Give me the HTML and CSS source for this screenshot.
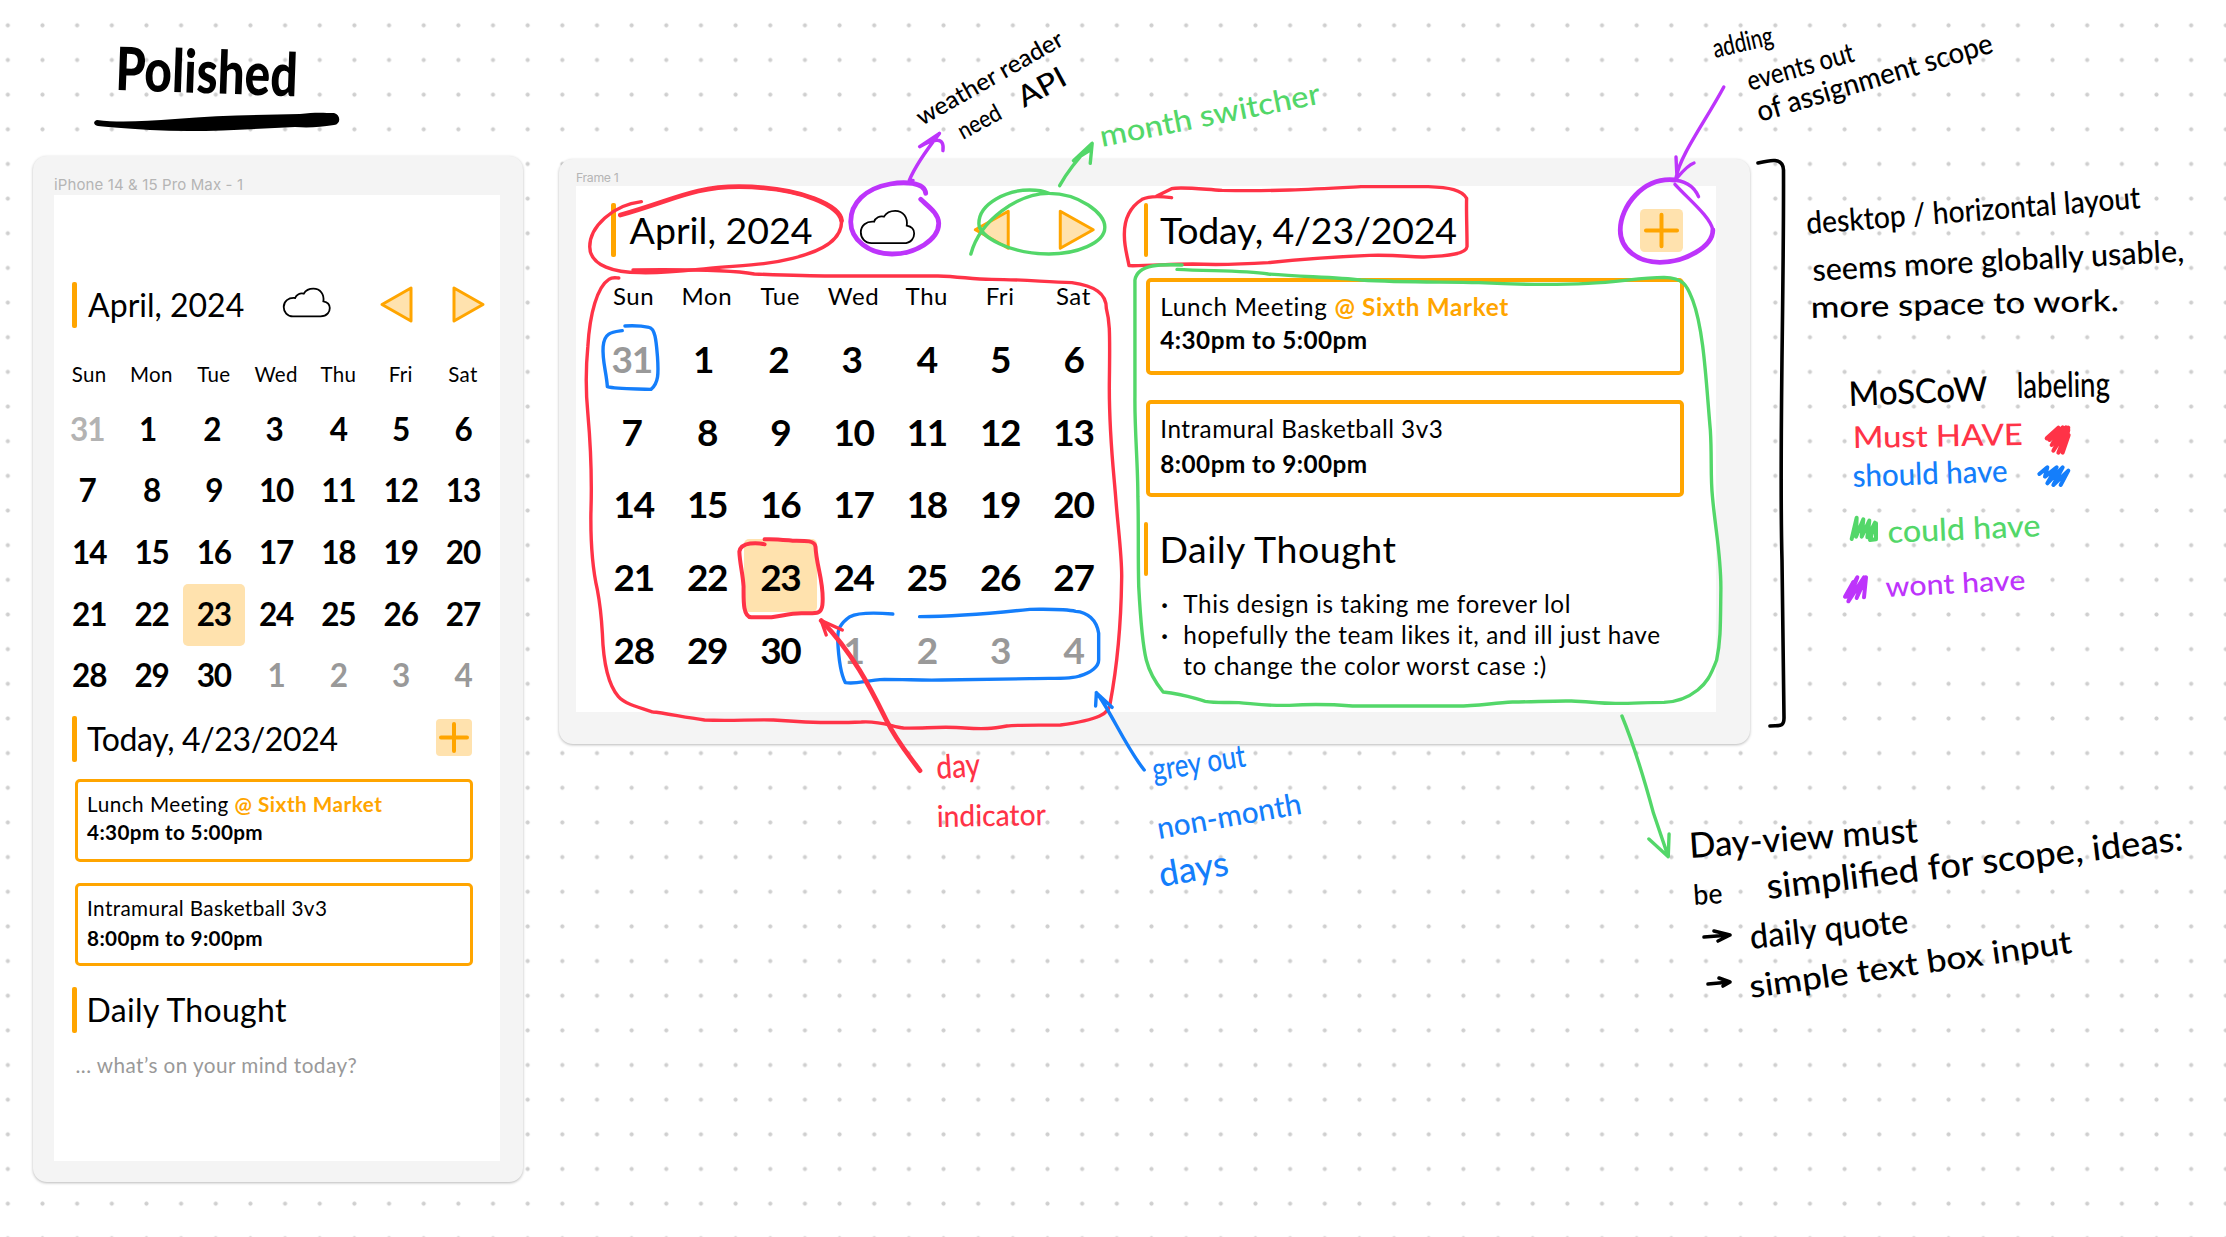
FILE: index.html
```html
<!DOCTYPE html>
<html lang="en">
<head>
<meta charset="utf-8">
<title>Calendar mockups</title>
<link rel="stylesheet" href="styles.css">
</head>
<body>
<main class="board">

  <section class="frame phone">
    <div class="frame-label">iPhone 14 &amp; 15 Pro Max - 1</div>
    <div class="screen">
      <header class="bar-title month-head">
        <h2 class="title">April, 2024</h2>
        <svg class="cloud" viewBox="0 0 133 87" preserveAspectRatio="none"><path d="M28 85H105C125 85 131 70 131 60C131 48 123 42 113 40C116 20 105 2 85 2C70 2 62 10 58 17C48 14 37 20 34 30C15 28 2 40 2 57C2 72 12 85 28 85Z"/></svg>
        <svg class="tri prev" viewBox="0 0 33 37" preserveAspectRatio="none"><path d="M31 2V35L2 18.500Z"/></svg>
        <svg class="tri next" viewBox="0 0 33 37" preserveAspectRatio="none"><path d="M2 2V35L31 18.500Z"/></svg>
      </header>
      <div class="weekdays"><span>Sun</span><span>Mon</span><span>Tue</span><span>Wed</span><span>Thu</span><span>Fri</span><span>Sat</span></div>
      <div class="days">
        <b class="out pale">31</b><b>1</b><b>2</b><b>3</b><b>4</b><b>5</b><b>6</b>
        <b>7</b><b>8</b><b>9</b><b>10</b><b>11</b><b>12</b><b>13</b>
        <b>14</b><b>15</b><b>16</b><b>17</b><b>18</b><b>19</b><b>20</b>
        <b>21</b><b>22</b><b class="today">23</b><b>24</b><b>25</b><b>26</b><b>27</b>
        <b>28</b><b>29</b><b>30</b><b class="out">1</b><b class="out">2</b><b class="out">3</b><b class="out">4</b>
      </div>
      <header class="bar-title day-head">
        <h2 class="title">Today, 4/23/2024</h2>
        <svg class="add" viewBox="0 0 36 37" preserveAspectRatio="none"><rect width="36" height="37" rx="4"/><path d="M5 18.500H31M18 5V32"/></svg>
      </header>
      <article class="event first"><p>Lunch Meeting <em>@ Sixth Market</em></p><p><strong>4:30pm to 5:00pm</strong></p></article>
      <article class="event second"><p>Intramural Basketball 3v3</p><p><strong>8:00pm to 9:00pm</strong></p></article>
      <header class="bar-title thought-head"><h2 class="title">Daily Thought</h2></header>
      <p class="hint">... what’s on your mind today?</p>
    </div>
  </section>

  <section class="frame desktop">
    <div class="frame-label">Frame 1</div>
    <div class="screen">
      <div class="month-col">
        <header class="bar-title month-head">
          <h2 class="title">April, 2024</h2>
          <svg class="cloud" viewBox="0 0 133 87" preserveAspectRatio="none"><path d="M28 85H105C125 85 131 70 131 60C131 48 123 42 113 40C116 20 105 2 85 2C70 2 62 10 58 17C48 14 37 20 34 30C15 28 2 40 2 57C2 72 12 85 28 85Z"/></svg>
          <svg class="tri prev" viewBox="0 0 33 37" preserveAspectRatio="none"><path d="M31 2V35L2 18.500Z"/></svg>
          <svg class="tri next" viewBox="0 0 33 37" preserveAspectRatio="none"><path d="M2 2V35L31 18.500Z"/></svg>
        </header>
        <div class="weekdays"><span>Sun</span><span>Mon</span><span>Tue</span><span>Wed</span><span>Thu</span><span>Fri</span><span>Sat</span></div>
        <div class="days">
          <b class="out">31</b><b>1</b><b>2</b><b>3</b><b>4</b><b>5</b><b>6</b>
          <b>7</b><b>8</b><b>9</b><b>10</b><b>11</b><b>12</b><b>13</b>
          <b>14</b><b>15</b><b>16</b><b>17</b><b>18</b><b>19</b><b>20</b>
          <b>21</b><b>22</b><b class="today">23</b><b>24</b><b>25</b><b>26</b><b>27</b>
          <b>28</b><b>29</b><b>30</b><b class="out">1</b><b class="out">2</b><b class="out">3</b><b class="out">4</b>
        </div>
      </div>
      <div class="day-col">
        <header class="bar-title day-head">
          <h2 class="title">Today, 4/23/2024</h2>
          <svg class="add" viewBox="0 0 36 37" preserveAspectRatio="none"><rect width="36" height="37" rx="4"/><path d="M5 18.500H31M18 5V32"/></svg>
        </header>
        <article class="event first"><p>Lunch Meeting <em>@ Sixth Market</em></p><p><strong>4:30pm to 5:00pm</strong></p></article>
        <article class="event second"><p>Intramural Basketball 3v3</p><p><strong>8:00pm to 9:00pm</strong></p></article>
        <header class="bar-title thought-head"><h2 class="title">Daily Thought</h2></header>
        <ul class="notes">
          <li>This design is taking me forever lol</li>
          <li>hopefully the team likes it, and ill just have<br>to change the color worst case :)</li>
        </ul>
      </div>
    </div>
  </section>

  <svg class="ink" viewBox="0 0 2226 1237">
    <!-- heading -->
    <text class="black heavy" transform="translate(115 90) rotate(2)" font-size="60" textLength="182" lengthAdjust="spacingAndGlyphs">Polished</text>
    <path class="solid" d="M97 120C120 123 145 121 175 119C220 115 260 115 300 114C315 112 325 113 334 113C341 115 341 124 334 125C320 127 310 128 295 127C250 129 200 133 150 130C130 129 110 127 98 126C93 125 93 121 97 120Z"/>

    <!-- marks over the month half -->
    <g transform="translate(540 0) scale(.38265 .33333)">
      <path class="red" d="M265 605C190 615 130 680 130 740C130 800 200 818 260 818C330 820 380 812 440 805C540 795 590 795 660 775C750 750 790 710 788 662C785 620 690 562 520 560"/>
      <path class="red wide" d="M788 662C785 620 690 562 520 560C400 560 350 600 210 645"/>
      <path class="purple wide" d="M1008 580C1005 545 950 545 915 552C850 565 812 610 812 665C812 720 860 762 920 762C980 762 1042 720 1042 670C1042 640 1015 620 995 598"/>
      <path class="purple" d="M975 541L965 541C980 500 1010 450 1044 400L992 440C1030 415 1058 410 1053 452"/>
      <path class="green" d="M1126 762C1150 660 1250 580 1330 580C1410 580 1475 640 1476 680C1478 730 1400 762 1330 762C1230 762 1146 710 1147 670C1147 610 1220 570 1280 570C1300 570 1320 575 1330 580"/>
      <path class="green" d="M1358 557C1380 510 1410 470 1443 430L1438 490M1443 430L1394 482L1438 450"/>
      <path class="red" d="M243 810C400 808 500 810 560 822C650 826 700 828 760 828L1040 828C1100 830 1130 838 1180 838C1260 838 1320 846 1390 848C1450 858 1480 880 1480 925C1488 960 1490 980 1488 1140C1486 1300 1500 1420 1505 1500C1512 1600 1522 1680 1520 1740C1518 1900 1508 2000 1490 2110C1490 2140 1460 2160 1360 2175C1300 2176 1250 2174 1220 2178C1180 2186 1160 2188 1110 2184C1050 2178 1000 2186 950 2184C920 2180 890 2162 840 2166C760 2170 700 2168 610 2160C550 2158 500 2164 430 2160C370 2150 320 2138 295 2136C250 2120 220 2110 205 2090C175 2050 165 1970 163 1900C160 1840 155 1800 150 1770C140 1720 132 1650 133 1540C136 1440 132 1330 125 1240C120 1180 120 1100 125 1040C130 940 150 860 180 838C190 830 200 834 206 834"/>
      <path class="blue" d="M215 992C190 996 168 996 165 1040C162 1080 174 1120 176 1160C200 1168 250 1166 290 1168C310 1150 310 1120 307 1070C304 1030 302 985 285 982C260 976 240 977 222 978"/>
      <path class="red mid" d="M587 1633C570 1628 525 1624 521 1655C522 1690 530 1720 532 1760C532 1800 530 1850 552 1852L605 1852C640 1846 660 1838 690 1840C720 1840 735 1844 738 1815C744 1750 722 1700 720 1640C718 1620 690 1622 660 1622C640 1620 610 1616 587 1618"/>
      <path class="blue" d="M922 1842C880 1838 830 1838 810 1850C785 1870 776 1890 778 1920C780 1970 785 2020 798 2048C830 2054 850 2040 900 2038C960 2038 1000 2042 1050 2040L1280 2036C1340 2034 1390 2038 1410 2028C1440 2018 1460 2000 1460 1980L1460 1900C1455 1860 1430 1836 1400 1834C1370 1826 1330 1828 1280 1828C1200 1838 1100 1850 992 1850"/>
      <path class="red wide" d="M735 1862C820 1960 870 2080 905 2160C930 2220 960 2260 993 2312"/>
      <path class="red" d="M748 1905L735 1862L790 1890"/>
      <path class="blue" d="M1452 2118L1454 2078L1495 2122M1454 2078C1490 2130 1530 2240 1579 2310"/>
    </g>

    <!-- marks over the day half -->
    <g transform="translate(1100 130) scale(.42092 .33333)">
      <path class="red" d="M170 203C140 198 115 198 100 208C60 240 57 290 58 320C58 350 65 380 69 407C120 408 160 402 220 402C290 406 350 402 400 398C500 385 560 380 640 376C720 374 730 382 770 381C830 378 870 372 872 350C872 300 870 240 871 205C860 180 830 172 780 170L620 170C500 178 420 184 290 181C230 176 190 170 170 176L135 198"/>
      <path class="purple wide" d="M1366 150C1290 140 1236 230 1236 300C1236 360 1280 397 1330 397C1390 397 1456 350 1456 300"/>
      <path class="purple" d="M1422 200C1410 165 1385 150 1355 150M1456 300C1450 260 1400 210 1366 163"/>
      <path class="green" d="M183 418C260 424 340 420 400 432C480 440 560 442 620 450C720 458 820 455 900 458C1000 464 1100 464 1160 460C1230 458 1280 442 1340 442C1390 444 1395 470 1408 510C1435 600 1440 760 1450 900C1454 980 1450 1040 1455 1100C1462 1200 1476 1280 1475 1380C1474 1480 1475 1530 1465 1590C1450 1640 1440 1660 1420 1680C1400 1700 1370 1716 1340 1717C1300 1717 1270 1720 1230 1720C1190 1721 1160 1714 1120 1713C1070 1712 1030 1716 980 1716C930 1720 890 1728 850 1728L600 1728C540 1722 500 1722 450 1726C400 1728 370 1722 330 1718C300 1716 280 1720 250 1714C220 1704 200 1692 150 1686C130 1655 118 1630 110 1590C100 1540 95 1440 92 1370C90 1280 92 1190 90 1100C90 1000 82 900 83 800L83 450C90 400 150 403 195 405"/>
      <path class="green" d="M1240 1758C1270 1850 1300 1980 1315 2050L1350 2180M1304 2127L1350 2180L1352 2112"/>
    </g>

    <path class="purple" d="M1723.800 87C1705 122 1680 155 1676 178M1676 157L1677 178C1682 172 1688 165 1694 163"/>
    <path class="black-line" d="M1758 163C1770 160 1783 157 1783.500 170C1784 300 1779 450 1782 560L1784 718C1784 728 1778 725 1770 726"/>

    <!-- handwritten notes -->
    <g class="black">
      <text transform="translate(922 126) rotate(-29.700)" font-size="24" textLength="165" lengthAdjust="spacingAndGlyphs">weather reader</text>
      <text transform="translate(963 140) rotate(-28.500)" font-size="24" textLength="46" lengthAdjust="spacingAndGlyphs">need</text>
      <text transform="translate(1024 108) rotate(-28.500)" font-size="29" textLength="51" lengthAdjust="spacingAndGlyphs">API</text>
      <text transform="translate(1715 58) rotate(-13)" font-size="27" textLength="61" lengthAdjust="spacingAndGlyphs">adding</text>
      <text transform="translate(1750 91) rotate(-15.800)" font-size="28" textLength="110" lengthAdjust="spacingAndGlyphs">events out</text>
      <text transform="translate(1760 122) rotate(-16.600)" font-size="29" textLength="245" lengthAdjust="spacingAndGlyphs">of assignment scope</text>
      <text transform="translate(1807 234) rotate(-4.400)" font-size="31" textLength="335" lengthAdjust="spacingAndGlyphs">desktop / horizontal layout</text>
      <text transform="translate(1813 281) rotate(-3)" font-size="31" textLength="372" lengthAdjust="spacingAndGlyphs">seems more globally usable,</text>
      <text transform="translate(1811 318) rotate(-1.300)" font-size="30" textLength="308" lengthAdjust="spacingAndGlyphs">more space to work.</text>
      <text transform="translate(1849 406) rotate(-2.200)" font-size="34" textLength="139" lengthAdjust="spacingAndGlyphs">MoSCoW</text>
      <text transform="translate(2017 398) rotate(-1)" font-size="35" textLength="93" lengthAdjust="spacingAndGlyphs">labeling</text>
      <text transform="translate(1690 858) rotate(-4)" font-size="35" textLength="229" lengthAdjust="spacingAndGlyphs">Day-view must</text>
      <text transform="translate(1694 905) rotate(-4)" font-size="28" textLength="29" lengthAdjust="spacingAndGlyphs">be</text>
      <text transform="translate(1768 899) rotate(-6.700)" font-size="35" textLength="419" lengthAdjust="spacingAndGlyphs">simplified for scope, ideas:</text>
      <text transform="translate(1751 949) rotate(-6)" font-size="34" textLength="159" lengthAdjust="spacingAndGlyphs">daily quote</text>
      <text transform="translate(1751 998) rotate(-8)" font-size="32" textLength="325" lengthAdjust="spacingAndGlyphs">simple text box input</text>
    </g>
    <path class="black-line" d="M1704 937L1730 935M1714 931L1730 935L1718 941M1708 984L1730 982M1719 978L1730 982L1723 986"/>

    <text class="green-text" transform="translate(1102 147) rotate(-11.200)" font-size="30" textLength="224" lengthAdjust="spacingAndGlyphs">month switcher</text>
    <g class="red-text">
      <text transform="translate(1853 448) rotate(-1)" font-size="30" textLength="170" lengthAdjust="spacingAndGlyphs">Must HAVE</text>
      <text transform="translate(937 779) rotate(-4)" font-size="33" textLength="44" lengthAdjust="spacingAndGlyphs">day</text>
      <text transform="translate(937 827) rotate(-1)" font-size="30" textLength="109" lengthAdjust="spacingAndGlyphs">indicator</text>
    </g>
    <g class="blue-text">
      <text transform="translate(1853 487) rotate(-2)" font-size="31" textLength="155" lengthAdjust="spacingAndGlyphs">should have</text>
      <text transform="translate(1154 781) rotate(-9)" font-size="32" textLength="94" lengthAdjust="spacingAndGlyphs">grey out</text>
      <text transform="translate(1159 839) rotate(-10)" font-size="30" textLength="146" lengthAdjust="spacingAndGlyphs">non-month</text>
      <text transform="translate(1161 887) rotate(-10)" font-size="35" textLength="70" lengthAdjust="spacingAndGlyphs">days</text>
    </g>
    <text class="green-text" transform="translate(1888 543) rotate(-2.500)" font-size="31" textLength="153" lengthAdjust="spacingAndGlyphs">could have</text>
    <text class="purple-text" transform="translate(1886 597) rotate(-3)" font-size="28" textLength="140" lengthAdjust="spacingAndGlyphs">wont have</text>

    <!-- colour swatches -->
    <g transform="translate(1760 330) scale(.33333)">
      <path class="red mid" d="M860 325L895 293L868 330L908 292L875 345L918 292L880 362L925 293L895 368L926 315L908 368L925 300"/>
      <path class="blue mid" d="M838 432L862 412L855 440L890 412L862 460L908 412L880 465L925 422L902 465"/>
      <path class="green mid" d="M275 627L290 563L288 620L310 568L305 620L328 572L322 622L345 578L330 630L348 628V580"/>
      <path class="purple mid" d="M255 800L280 756L258 800L292 742L265 814L312 742L290 804L318 742L312 802"/>
    </g>
  </svg>
</main>
</body>
</html>
```
FILE: styles.css
```css
* { box-sizing: border-box; margin: 0; padding: 0; }

body {
  width: 2226px;
  height: 1237px;
  overflow: hidden;
  background: #fff;
  color: #000;
  font-family: Lato, "Open Sans", sans-serif;
}

em { font-style: normal; }

/* dotted canvas */
.board {
  position: relative;
  width: 2226px;
  height: 1237px;
  background-image: radial-gradient(circle at center, #cfcfcf 1.7px, rgba(207, 207, 207, 0) 2.4px);
  background-size: 34.667px 34.667px;
  background-position: -9.500px 8px;
}

.frame {
  --accent: #ffa500;
  --tint: #ffe2ae;
  position: absolute;
  background: #f4f4f4;
  border-radius: 14px;
  box-shadow: 0 1px 3px rgba(0, 0, 0, .28);
}

.frame-label {
  color: #b5b5b5;
  font-family: Inter, sans-serif;
  white-space: nowrap;
}

.screen { background: #fff; }

/* section headings */
.bar-title {
  display: flex;
  align-items: center;
  height: var(--bar-h);
  white-space: nowrap;
}
.bar-title::before {
  content: "";
  flex: none;
  width: 4.600px;
  height: 100%;
  border-radius: 2px;
  background: var(--accent);
}
.title { flex: none; font-size: var(--title); font-weight: 400; line-height: var(--bar-h); }

.cloud path { fill: none; stroke: #000; stroke-width: 1.800px; vector-effect: non-scaling-stroke; }
.tri path { fill: var(--tint); stroke: var(--accent); stroke-width: 3px; stroke-linejoin: round; vector-effect: non-scaling-stroke; }
.add rect { fill: var(--tint); }
.add path { stroke: var(--accent); stroke-width: 4px; stroke-linecap: round; vector-effect: non-scaling-stroke; }
.cloud, .tri, .add { flex: none; display: block; overflow: visible; }

/* calendar */
.weekdays, .days { display: grid; text-align: center; }
.days b { padding-top: 1.500px; font-weight: 700; color: #000; }
.days .out { color: #999; }
.days .pale { color: #b3b3b3; }
.days .today { border-radius: 5px; background: var(--tint); }
.days b:nth-child(1) { padding-right: 4px; }
.days b:nth-child(2) { padding-right: 8px; }
.days b:nth-child(3), .days b:nth-child(4), .days b:nth-child(8) { padding-right: 4px; }

/* events */
.event { border: var(--edge) solid var(--accent); border-radius: 5px; white-space: nowrap; }
.event em { color: var(--accent); font-weight: 700; }
.event strong { font-weight: 700; }

/* phone */
.phone {
  --bar-h: 46px;
  --title: 32px;
  --edge: 3px;
  left: 33px;
  top: 156px;
  width: 490px;
  height: 1026px;
  padding: 18px 23px 21px 21px;
}
.phone .frame-label { height: 21.300px; font-size: 15px; line-height: 21.300px; letter-spacing: .12px; }
.phone .screen { height: 965.400px; padding: 86.400px 27.500px 0 18px; }
.phone .title { margin-left: 11.500px; width: 195.100px; }
.phone .cloud { width: 47.500px; height: 29px; margin: -5px 49px 0 0; }
.phone .tri { width: 33px; height: 37px; margin-top: -1px; }
.phone .prev { margin-right: 39px; }
.phone .weekdays, .phone .days { width: 436.100px; margin-left: -14px; grid-template-columns: repeat(7, 62.300px); }
.phone .weekdays { margin-top: 23px; font-size: 20.500px; line-height: 46.400px; letter-spacing: .3px; }
.phone .days { grid-auto-rows: 61.700px; font-size: 31.500px; line-height: 61.700px; letter-spacing: -1.200px; }
.phone .today { margin: 1.500px 0 -2px; line-height: 59px; }
.phone .day-head { margin-top: 10.500px; }
.phone .day-head .title { margin-left: 10.500px; width: 349px; letter-spacing: -.35px; }
.phone .add { width: 36px; height: 37px; margin-top: -4px; }
.phone .event { margin-left: 2.600px; height: 82.700px; padding: 8px 0 0 9.500px; font-size: 20.700px; line-height: 28px; letter-spacing: .5px; }
.phone .event strong { letter-spacing: .35px; }
.phone .first { margin-top: 17.300px; }
.phone .event.second { margin-top: 21.300px; padding-top: 6.500px; line-height: 30px; letter-spacing: .38px; }
.phone .thought-head { margin-top: 21px; }
.phone .thought-head .title { margin-left: 10px; letter-spacing: .3px; }
.phone .hint { margin: 18px 0 0 3.500px; font-size: 20.700px; line-height: 28px; letter-spacing: .45px; color: #999; white-space: nowrap; }

/* desktop */
.desktop {
  --bar-h: 53.500px;
  --title: 37.500px;
  --edge: 4px;
  left: 558.500px;
  top: 159px;
  width: 1191.500px;
  height: 584.500px;
  padding: 10px 34.500px 31px 17.500px;
}
.desktop .frame-label { height: 17px; font-size: 12.300px; line-height: 17px; letter-spacing: -.35px; }
.desktop .screen { display: grid; grid-template-columns: 532.800px 1fr; height: 526px; padding: 17.300px 31.900px 0 35px; }
.desktop .title { margin-left: 14px; width: 230px; }
.desktop .cloud { width: 55px; height: 34px; margin: -6px 58.700px 0 0; }
.desktop .tri { width: 37.500px; height: 41.500px; }
.desktop .prev { margin-right: 47px; }
.desktop .weekdays, .desktop .days { width: 513.100px; margin-left: -14px; grid-template-columns: repeat(7, 73.300px); }
.desktop .weekdays { margin-top: 13px; font-size: 24px; line-height: 51.600px; letter-spacing: .6px; }
.desktop .days { grid-auto-rows: 72.700px; font-size: 37px; line-height: 72.700px; letter-spacing: -1.400px; }
.desktop .day-head .title { margin-left: 11.500px; width: 480.500px; letter-spacing: -.2px; }
.desktop .add { width: 43px; height: 43px; }
.desktop .event { margin-left: 2px; height: 97px; padding: 8.200px 0 0 10.500px; font-size: 24.300px; line-height: 33.500px; letter-spacing: .65px; }
.desktop .event strong { letter-spacing: .45px; }
.desktop .first { margin-top: 21px; }
.desktop .event.second { margin-top: 25.300px; padding-top: 6.500px; line-height: 35px; letter-spacing: .48px; }
.desktop .thought-head { margin-top: 25px; }
.desktop .thought-head .title { margin-left: 11px; letter-spacing: .55px; }
.notes { list-style: none; margin: 13.500px 0 0 39.500px; font-size: 24.300px; line-height: 30.700px; letter-spacing: .6px; white-space: nowrap; }
.notes li::before { content: "·"; display: inline-block; width: 22px; margin-left: -22px; font-weight: 700; letter-spacing: 0; }

/* pen layer */
.ink { position: absolute; left: 0; top: 0; width: 2226px; height: 1237px; }
.ink path { fill: none; stroke-width: 3.400px; stroke-linecap: round; stroke-linejoin: round; vector-effect: non-scaling-stroke; }
.ink .mid { stroke-width: 4px; }
.ink .wide { stroke-width: 4.800px; }
.ink .solid { fill: #000; }
.ink .black-line { stroke: #000; stroke-width: 3.600px; }
.ink .red { stroke: #ff3347; }
.ink .green { stroke: #53d769; }
.ink .blue { stroke: #147efb; }
.ink .purple { stroke: #bd34fb; }
.ink text { font-family: Lato, sans-serif; font-weight: 500; }
.ink .heavy { font-weight: 900; }
.red-text { fill: #ff3347; }
.green-text { fill: #53d769; }
.blue-text { fill: #147efb; }
.purple-text { fill: #bd34fb; }
```
